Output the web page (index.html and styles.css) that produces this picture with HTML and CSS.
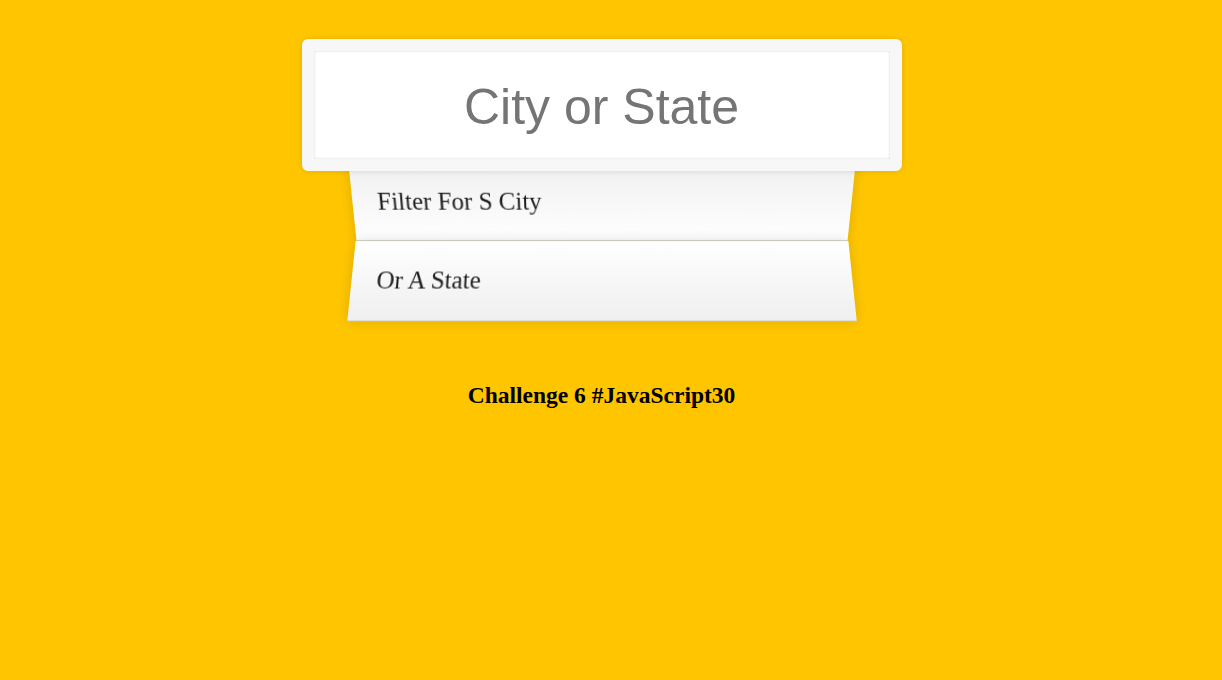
FILE: index.html
```html
<!DOCTYPE html>
<html>
<head>
<meta charset="utf-8">
<title>Type Ahead</title>
<link rel="stylesheet" href="styles.css">
</head>
<body>
<div class="page">
  <form class="search-form">
    <input type="text" class="search" placeholder="City or State">
    <ul class="suggestions">
      <li>Filter for s city</li>
      <li>or a state</li>
    </ul>
  </form>
  <h2 class="credit">Challenge 6 #JavaScript30</h2>
</div>
</body>
</html>
```

FILE: styles.css
```css
html {
  box-sizing: border-box;
  background: #ffc600;
}

*, *::before, *::after {
  box-sizing: inherit;
}

body {
  margin: 0;
  font-family: "Liberation Serif", "Times New Roman", serif;
}

.page {
  width: 1203px;
  overflow: hidden;
}

.search-form {
  width: 500px;
  margin: 26.5px auto 64px;
}

.search {
  display: block;
  position: relative;
  top: 12.5px;
  left: -10%;
  z-index: 2;
  width: 120%;
  margin: 0;
  padding: 28px 25px 22px;
  font-family: "Liberation Sans", Arial, sans-serif;
  font-size: 50px;
  line-height: 57.5px;
  color: #333;
  text-align: center;
  outline: 0;
  border: 12.5px solid #f7f7f7;
  border-radius: 6px;
  background: #fff;
  box-shadow: 0 0 6px rgba(0, 0, 0, 0.12), inset 0 0 2.5px rgba(0, 0, 0, 0.19);
}

.search::placeholder {
  color: #757575;
}

.suggestions {
  margin: 0;
  padding: 0;
  position: relative;
}

.suggestions li {
  list-style: none;
  margin: 0;
  padding: 25px;
  font-size: 25px;
  line-height: 29px;
  color: #1e1e1e;
  text-transform: capitalize;
  border-bottom: 1px solid #d8d8d8;
  box-shadow: 0 0 12px rgba(0, 0, 0, 0.14);
  display: flex;
  justify-content: space-between;
}

.suggestions li:nth-child(odd) {
  transform: perspective(125px) rotateX(-3deg) translateY(3.75px);
  background: linear-gradient(to top, #ffffff 0%, #efefef 100%);
}

.suggestions li:nth-child(even) {
  transform: perspective(125px) rotateX(3deg) translateY(2.5px) scale(1.001);
  background: linear-gradient(to bottom, #ffffff 0%, #efefef 100%);
}

.credit {
  margin: 0;
  text-align: center;
  font-size: 23.5px;
  line-height: 27px;
  font-weight: bold;
  color: #000;
}
```
